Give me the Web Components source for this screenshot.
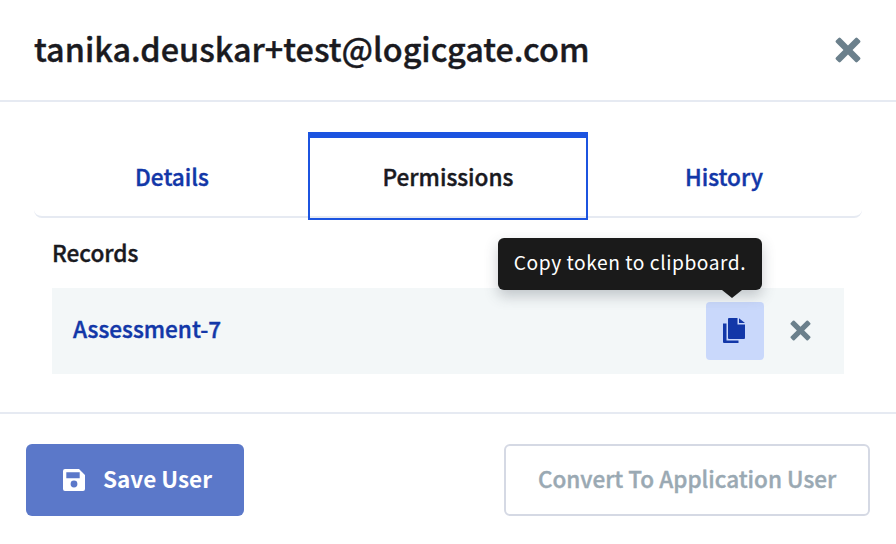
<!DOCTYPE html>
<html>
<head>
<meta charset="utf-8">
<title>User</title>
<style>
  html, body { margin: 0; padding: 0; background: #fff; }
  body { font-family: "Noto Sans CJK JP", "Noto Sans", sans-serif; color: #1a1a1f; width: 896px; height: 544px; overflow: hidden; }
</style>
</head>
<body>
<user-modal>
  <span slot="title">tanika.deuskar+test@logicgate.com</span>
  <tab-bar>
    <tab-item>Details</tab-item>
    <tab-item active>Permissions</tab-item>
    <tab-item>History</tab-item>
  </tab-bar>
  <records-list>
    <record-row>Assessment-7</record-row>
  </records-list>
  <app-button slot="footer" kind="primary">Save User</app-button>
  <app-button slot="footer" kind="outline">Convert To Application User</app-button>
</user-modal>

<script>
const CLOSE_PATH = 'M3.4 0.6 L8 5.2 L12.6 0.6 Q13.2 0 13.8 0.6 L15.4 2.2 Q16 2.8 15.4 3.4 L10.8 8 L15.4 12.6 Q16 13.2 15.4 13.8 L13.8 15.4 Q13.2 16 12.6 15.4 L8 10.8 L3.4 15.4 Q2.8 16 2.2 15.4 L0.6 13.8 Q0 13.2 0.6 12.6 L5.2 8 L0.6 3.4 Q0 2.8 0.6 2.2 L2.2 0.6 Q2.8 0 3.4 0.6 Z';
// the CJK family only has 500 and 700, a thin stroke gets text to the semibold of the original
const SEMIBOLD = 'font-weight: 500; -webkit-text-stroke: 0.4px currentColor;';

class UserModal extends HTMLElement {
  connectedCallback() {
    this.attachShadow({ mode: 'open' });
    this.shadowRoot.innerHTML = `
      <style>
        :host { display: flex; flex-direction: column; width: 896px; height: 544px; }
        header {
          display: flex; justify-content: space-between; align-items: center;
          height: 100px; padding: 0 34px; border-bottom: 2px solid #e6eaf2;
        }
        h1 { margin: 0 0 4px; font-size: 32.4px; line-height: 60px; ${SEMIBOLD} color: #1a1a1f; }
        header svg { width: 26px; height: 26px; fill: #6b808c; display: block; margin-right: 1px; }
        main { flex: none; height: 312px; padding: 30px 34px 0; box-sizing: border-box; border-bottom: 2px solid #e6eaf2; }
        footer { display: flex; justify-content: space-between; padding: 30px 26px 0; }
      </style>
      <header>
        <h1><slot name="title"></slot></h1>
        <svg viewBox="0 0 16 16"><path d="${CLOSE_PATH}"/></svg>
      </header>
      <main><slot></slot></main>
      <footer><slot name="footer"></slot></footer>
    `;
  }
}

class TabBar extends HTMLElement {
  connectedCallback() {
    this.attachShadow({ mode: 'open' });
    this.shadowRoot.innerHTML = `
      <style>
        :host {
          display: grid; grid-template-columns: repeat(3, 276px); height: 84px; align-items: start;
          border-bottom: 2px solid #e6eaf2; border-radius: 0 0 8px 8px;
        }
      </style>
      <slot></slot>
    `;
  }
}

class TabItem extends HTMLElement {
  connectedCallback() {
    this.attachShadow({ mode: 'open' });
    this.shadowRoot.innerHTML = `
      <style>
        :host {
          display: flex; align-items: center; justify-content: center; box-sizing: border-box;
          height: 88px; font-size: 22.6px; ${SEMIBOLD} color: #1237a8;
        }
        :host([active]) {
          color: #1a1a1f; border: 2px solid #1c54e0; border-top-width: 6px; padding-bottom: 4px; margin: 0 -2px;
        }
      </style>
      <slot></slot>
    `;
  }
}

class RecordsList extends HTMLElement {
  connectedCallback() {
    this.attachShadow({ mode: 'open' });
    this.shadowRoot.innerHTML = `
      <style>
        :host { display: block; padding: 0 18px; }
        h2 { margin: 0; height: 70px; line-height: 70px; font-size: 22.6px; ${SEMIBOLD} color: #1a1a1f; }
      </style>
      <h2>Records</h2>
      <slot></slot>
    `;
  }
}

class RecordRow extends HTMLElement {
  connectedCallback() {
    this.attachShadow({ mode: 'open' });
    this.shadowRoot.innerHTML = `
      <style>
        :host {
          display: flex; align-items: center; height: 86px; padding: 0 33px 0 21px;
          background: #f3f7f8; position: relative;
        }
        .name { flex: 1; font-size: 22.6px; ${SEMIBOLD} color: #1237a8; padding-bottom: 6px; }
        .copy {
          width: 58px; height: 58px; border-radius: 4px; background: #c9d8fb;
          display: flex; align-items: center; justify-content: center; position: relative;
        }
        .copy svg { width: 22px; height: 25px; fill: #1237a8; display: block; margin: 0 2px 2px 0; }
        .remove { width: 21px; height: 21px; fill: #6b808c; margin-left: 26px; margin-bottom: 2px; display: block; }
        .tip {
          position: absolute; left: 446px; top: -50px; width: 264px; height: 52px; box-sizing: border-box;
          background: #1a1a1a; color: #fff; border-radius: 6px; font-size: 19.2px; font-weight: 400;
          line-height: 48px; text-align: center; letter-spacing: 0.55px; white-space: nowrap;
          box-shadow: 0 6px 14px rgba(60, 70, 80, 0.28);
        }
        .tip::after {
          content: ""; position: absolute; left: 224px; top: 52px;
          border-left: 10px solid transparent; border-right: 10px solid transparent; border-top: 8px solid #1a1a1a;
        }
      </style>
      <span class="name"><slot></slot></span>
      <span class="copy">
        <svg viewBox="0 0 22 25"><path d="M6 0 H14.5 V6.5 H22 V20 Q22 21 21 21 H6 Q5 21 5 20 V1 Q5 0 6 0 Z M16 0.3 L22 5 H16 Z M0 5.5 H3.5 V22.5 H15.5 V25 H1 Q0 25 0 24 Z"/></svg>
      </span>
      <svg class="remove" viewBox="0 0 16 16"><path d="${CLOSE_PATH}"/></svg>
      <div class="tip">Copy token to clipboard.</div>
    `;
  }
}

class AppButton extends HTMLElement {
  connectedCallback() {
    this.attachShadow({ mode: 'open' });
    const primary = this.getAttribute('kind') === 'primary';
    this.shadowRoot.innerHTML = `
      <style>
        :host {
          display: flex; align-items: center; justify-content: center; gap: 18px; height: 72px; box-sizing: border-box;
          border-radius: 6px; font-size: 22.5px; ${SEMIBOLD}
        }
        :host([kind="primary"]) { width: 218px; background: #5b78c9; color: #fff; padding-left: 5px; font-weight: 700; -webkit-text-stroke: 0; }
        :host([kind="outline"]) { width: 366px; border: 2px solid #d5d9e4; color: #9aa9b3; }
        .label { padding-bottom: 4px; }
        svg { width: 22px; height: 22px; fill: #fff; display: block; }
      </style>
      ${primary ? `<svg viewBox="0 0 22 22"><path fill-rule="evenodd" d="M2 0 H16 L22 6 V20 Q22 22 20 22 H2 Q0 22 0 20 V2 Q0 0 2 0 Z M3.3 3.3 V9.3 H16.7 V3.3 Z M11 11.6 A3.4 3.4 0 1 0 11 18.4 A3.4 3.4 0 1 0 11 11.6 Z"/></svg>` : ''}
      <span class="label"><slot></slot></span>
    `;
  }
}

customElements.define('user-modal', UserModal);
customElements.define('tab-bar', TabBar);
customElements.define('tab-item', TabItem);
customElements.define('records-list', RecordsList);
customElements.define('record-row', RecordRow);
customElements.define('app-button', AppButton);
</script>
</body>
</html>
